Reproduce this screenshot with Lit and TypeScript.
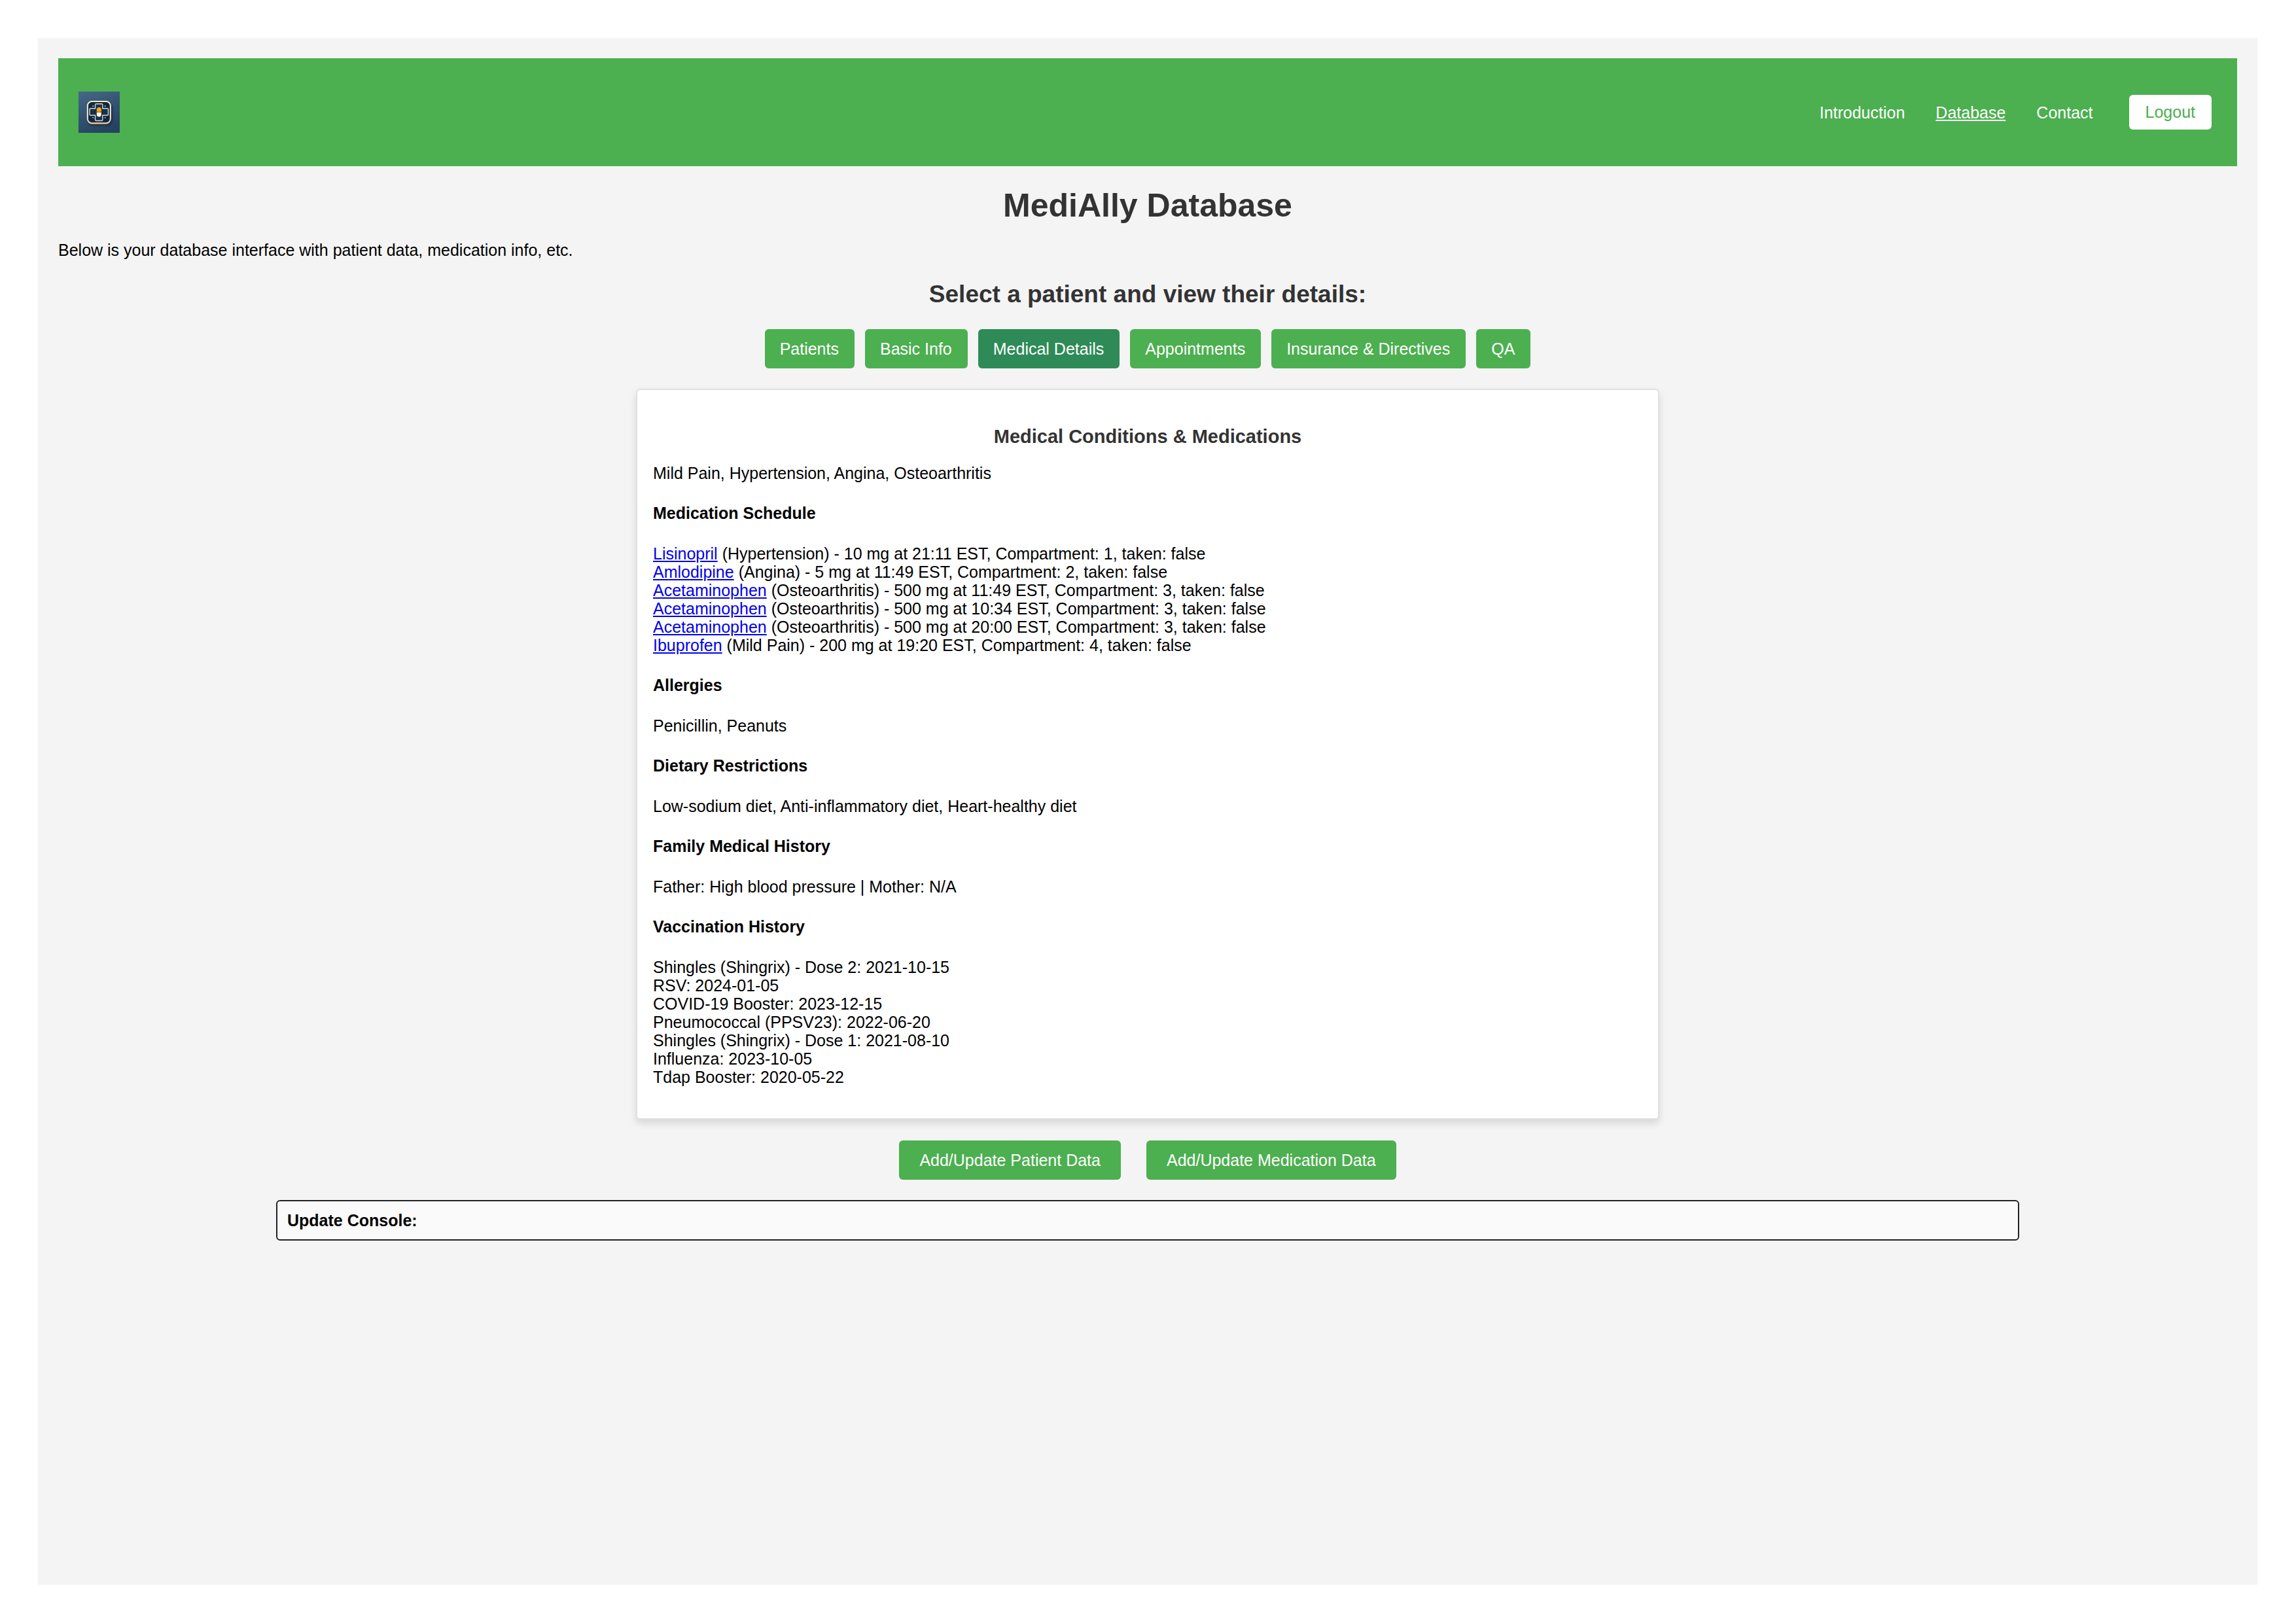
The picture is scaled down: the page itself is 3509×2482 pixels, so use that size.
import { LitElement, html, css } from "lit";
import { customElement, state } from "lit/decorators.js";
import { classMap } from "lit/directives/class-map.js";

interface Dose {
  drug: string;
  detail: string;
}

const TABS = ["Patients", "Basic Info", "Medical Details", "Appointments", "Insurance & Directives", "QA"];

const DOSES: Dose[] = [
  { drug: "Lisinopril", detail: "(Hypertension) - 10 mg at 21:11 EST, Compartment: 1, taken: false" },
  { drug: "Amlodipine", detail: "(Angina) - 5 mg at 11:49 EST, Compartment: 2, taken: false" },
  { drug: "Acetaminophen", detail: "(Osteoarthritis) - 500 mg at 11:49 EST, Compartment: 3, taken: false" },
  { drug: "Acetaminophen", detail: "(Osteoarthritis) - 500 mg at 10:34 EST, Compartment: 3, taken: false" },
  { drug: "Acetaminophen", detail: "(Osteoarthritis) - 500 mg at 20:00 EST, Compartment: 3, taken: false" },
  { drug: "Ibuprofen", detail: "(Mild Pain) - 200 mg at 19:20 EST, Compartment: 4, taken: false" },
];

const VACCINES = [
  "Shingles (Shingrix) - Dose 2: 2021-10-15",
  "RSV: 2024-01-05",
  "COVID-19 Booster: 2023-12-15",
  "Pneumococcal (PPSV23): 2022-06-20",
  "Shingles (Shingrix) - Dose 1: 2021-08-10",
  "Influenza: 2023-10-05",
  "Tdap Booster: 2020-05-22",
];

@customElement("medi-logo")
export class MediLogo extends LitElement {
  static styles = css`
    :host {
      display: block;
      width: 63px;
      height: 63px;
    }
    .art {
      display: block;
      width: 100%;
      height: 100%;
    }
  `;

  render() {
    return html`
      <svg class="art" viewBox="0 0 63 63" role="img" aria-label="MediAlly">
        <defs>
          <linearGradient id="ground" x1="0" y1="0" x2="0.4" y2="1">
            <stop offset="0" stop-color="#46688a" />
            <stop offset="0.5" stop-color="#365575" />
            <stop offset="1" stop-color="#264462" />
          </linearGradient>
          <linearGradient id="rim" x1="0" y1="0" x2="0" y2="1">
            <stop offset="0" stop-color="#f3ecc4" />
            <stop offset="0.6" stop-color="#f4efe4" />
            <stop offset="1" stop-color="#efd0bd" />
          </linearGradient>
          <filter id="soft" x="-30%" y="-30%" width="160%" height="160%">
            <feGaussianBlur stdDeviation="1.6" />
          </filter>
        </defs>
        <rect width="63" height="63" fill="url(#ground)" />
        <rect x="14" y="16" width="38" height="36" rx="9" fill="#0f2134" opacity="0.7" filter="url(#soft)" />
        <rect x="12.8" y="14.2" width="36.8" height="36" rx="8.6" fill="#7c5536" />
        <rect x="13.8" y="15" width="35" height="33.2" rx="6.6" fill="#16273a" stroke="url(#rim)" stroke-width="2" />
        <path
          d="M26.9 18.7h8.6q1.3 0 1.3 1.3v5.7h7.3q1.3 0 1.3 1.3v8q0 1.3-1.3 1.3h-7.3v6.9q0 1.3-1.3 1.3h-8.6q-1.3 0-1.3-1.3v-6.9h-7.3q-1.3 0-1.3-1.3v-8q0-1.3 1.3-1.3h7.3v-5.7q0-1.3 1.3-1.3z"
          fill="#1c2f44"
          stroke="#c9dadd"
          stroke-width="1.4"
        />
        <path d="M27.8 31v-3.4a3.5 3.5 0 0 1 7 0V31z" fill="#f2ab12" />
        <path d="M27.8 31.8h7v3.2a3.5 3.5 0 0 1-7 0z" fill="#faf7ea" />
        <rect x="27.8" y="30.3" width="7" height="1.6" fill="#b9781c" />
        <circle cx="22.2" cy="22.3" r="1" fill="#b4c6d3" />
        <circle cx="40.6" cy="22.3" r="1" fill="#b4c6d3" />
        <circle cx="22.2" cy="39.8" r="1" fill="#b4c6d3" />
        <circle cx="40.6" cy="39.8" r="1" fill="#b4c6d3" />
      </svg>
    `;
  }
}

@customElement("app-root")
export class AppRoot extends LitElement {
  @state() private tab = "Medical Details";

  static styles = css`
    :host {
      display: flex;
      box-sizing: border-box;
      min-height: 100vh;
      padding: 58px 59px 60px 58px;
      background: #fff;
      color: #000;
      font: 25px/28px "Liberation Sans", Arial, sans-serif;
    }
    h1,
    h2,
    h3,
    h4,
    p,
    ul {
      margin: 0;
      padding: 0;
    }
    ul {
      list-style: none;
    }
    button {
      border: 0;
      border-radius: 6px;
      font: inherit;
      cursor: pointer;
    }
    .page {
      flex: 1;
      min-width: 0;
      padding: 31px;
      background: #f4f4f4;
    }
    .bar {
      display: flex;
      align-items: center;
      justify-content: space-between;
      min-height: 103px;
      padding: 31px;
      background: #4caf50;
    }
    .nav {
      display: flex;
      align-items: center;
      gap: 47px;
    }
    .link {
      color: #fff;
      text-decoration: none;
    }
    .link.current {
      text-decoration: underline;
    }
    .logout {
      margin: 0 8px;
      padding: 12px 25px 13px;
      background: #fff;
      color: #4caf50;
    }
    .title {
      margin-top: 32px;
      font-size: 50px;
      line-height: 56px;
      text-align: center;
      color: #333;
    }
    .intro {
      margin-top: 26px;
    }
    .prompt {
      margin-top: 33px;
      font-size: 37px;
      line-height: 42px;
      text-align: center;
      color: #333;
    }
    .tabs {
      display: flex;
      flex-wrap: wrap;
      justify-content: center;
      gap: 16px;
      margin-top: 32px;
    }
    .tab {
      padding: 16px 24px 16px 23px;
      background: #4caf50;
      color: #fff;
    }
    .tab.active {
      background: #2e8b57;
    }
    .card {
      box-sizing: border-box;
      max-width: 1564px;
      margin: 31px auto 0;
      padding: 55px 24px 49px;
      border: 2px solid #e0e0e0;
      border-radius: 6px;
      background: #fff;
      box-shadow: 0 6px 12px rgba(0, 0, 0, 0.12);
    }
    .heading {
      margin-bottom: 25px;
      font-size: 29px;
      line-height: 33px;
      text-align: center;
      color: #333;
    }
    .section {
      margin: 33px 0 34px;
      font-size: 25px;
    }
    .drug {
      color: #0000ee;
    }
    .actions {
      display: flex;
      flex-wrap: wrap;
      justify-content: center;
      gap: 39px;
      margin-top: 32px;
    }
    .action {
      padding: 16px 31px;
      background: #4caf50;
      color: #fff;
    }
    .console {
      box-sizing: border-box;
      width: 80%;
      margin: 31px auto 0;
      padding: 15px;
      border: 2px solid #222;
      border-radius: 6px;
      background: #fafafa;
    }
  `;

  render() {
    return html`
      <div class="page">
        <header class="bar">
          <medi-logo></medi-logo>
          <nav class="nav">
            <a class="link" href="#introduction">Introduction</a>
            <a class="link current" href="#database" aria-current="page">Database</a>
            <a class="link" href="#contact">Contact</a>
            <button class="logout" type="button">Logout</button>
          </nav>
        </header>
        <main>
          <h1 class="title">MediAlly Database</h1>
          <p class="intro">Below is your database interface with patient data, medication info, etc.</p>
          <h2 class="prompt">Select a patient and view their details:</h2>
          <div class="tabs">
            ${TABS.map(
              (name) => html`<button
                type="button"
                class=${classMap({ tab: true, active: name === this.tab })}
                aria-pressed=${name === this.tab ? "true" : "false"}
                @click=${() => (this.tab = name)}
              >${name}</button>`
            )}
          </div>
          <section class="card">
            <h3 class="heading">Medical Conditions &amp; Medications</h3>
            <p>Mild Pain, Hypertension, Angina, Osteoarthritis</p>
            <h4 class="section">Medication Schedule</h4>
            <ul>
              ${DOSES.map((d) => html`<li><a class="drug" href="#medication">${d.drug}</a> ${d.detail}</li>`)}
            </ul>
            <h4 class="section">Allergies</h4>
            <p>Penicillin, Peanuts</p>
            <h4 class="section">Dietary Restrictions</h4>
            <p>Low-sodium diet, Anti-inflammatory diet, Heart-healthy diet</p>
            <h4 class="section">Family Medical History</h4>
            <p>Father: High blood pressure | Mother: N/A</p>
            <h4 class="section">Vaccination History</h4>
            <ul>
              ${VACCINES.map((v) => html`<li>${v}</li>`)}
            </ul>
          </section>
          <div class="actions">
            <button class="action" type="button">Add/Update Patient Data</button>
            <button class="action" type="button">Add/Update Medication Data</button>
          </div>
          <section class="console"><strong>Update Console:</strong></section>
        </main>
      </div>
    `;
  }
}
